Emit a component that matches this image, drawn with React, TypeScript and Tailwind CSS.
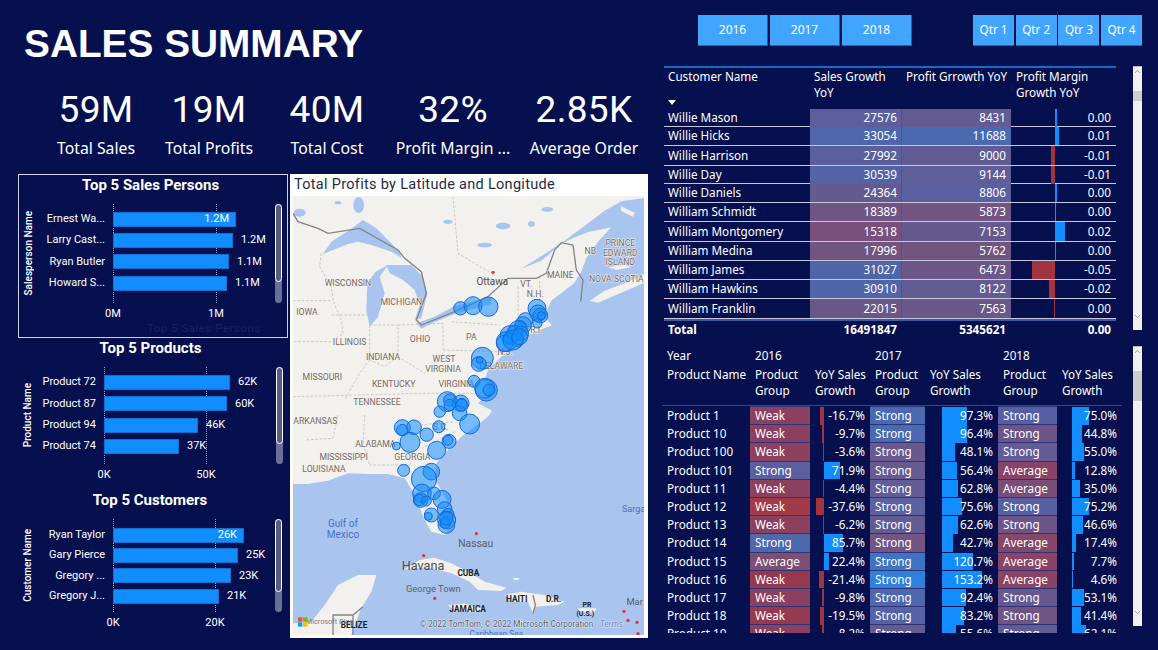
import { ChevronDown, ChevronUp } from "lucide-react";

const din = "font-['Roboto',sans-serif]";
const ui = "font-['Noto_Sans',sans-serif]";

type Bar = { name: string; width: number; value: string; inside?: boolean };

const salesPersons: Bar[] = [
  { name: "Ernest Wa...", width: 123, value: "1.2M", inside: true },
  { name: "Larry Cast...", width: 120, value: "1.2M" },
  { name: "Ryan Butler", width: 116, value: "1.1M" },
  { name: "Howard S...", width: 114, value: "1.1M" },
];
const products: Bar[] = [
  { name: "Product 72", width: 126, value: "62K" },
  { name: "Product 87", width: 123, value: "60K" },
  { name: "Product 94", width: 94, value: "46K" },
  { name: "Product 74", width: 75, value: "37K" },
];
const customers: Bar[] = [
  { name: "Ryan Taylor", width: 131, value: "26K", inside: true },
  { name: "Gary Pierce", width: 125, value: "25K" },
  { name: "Gregory ...", width: 118, value: "23K" },
  { name: "Gregory J...", width: 106, value: "21K" },
];

function ChartCard(props: {
  title: string;
  axis: string;
  bars: Bar[];
  ticks: [string, string];
  tickGap: number;
  box: string;
  catWidth: string;
  pad: string;
  rowHeight: string;
  plotHeight: string;
  thumb: string;
  children?: React.ReactNode;
}) {
  return (
    <div className={`relative w-[270px] ${props.box}`}>
      <div className={`${din} h-[20px] text-center text-[15px] leading-[20px] font-bold text-white`}>{props.title}</div>
      <div className="mt-[9px] flex">
        <div className={`${props.plotHeight} flex w-[18px] items-center justify-center`}>
          <span className={`${din} rotate-180 text-[10px] font-medium whitespace-nowrap text-white [writing-mode:vertical-rl]`}>{props.axis}</span>
        </div>
        <div className={`${props.catWidth} ${props.pad}`}>
          {props.bars.map((b) => (
            <div key={b.name} className={`${din} ${props.rowHeight} flex items-center justify-end text-[11px] whitespace-nowrap text-white`}>
              {b.name}
            </div>
          ))}
        </div>
        <div className="relative ml-[8px] flex-1">
          <div className={`relative ${props.plotHeight} ${props.pad}`}>
            <div className="absolute top-0 bottom-0 left-0 border-l border-dotted border-[#9aa0c0]" />
            <div className="absolute top-0 bottom-0 border-l border-dotted border-[#9aa0c0]" style={{ left: props.tickGap }} />
            {props.bars.map((b) => (
              <div key={b.name} className={`relative ${props.rowHeight} flex items-center`}>
                <div className="flex h-[15px] items-center justify-end border border-[#0f6fd0] bg-[#118dff] pr-[6px]" style={{ width: b.width }}>
                  {b.inside && <span className={`${din} text-[11px] text-white`}>{b.value}</span>}
                </div>
                {!b.inside && <span className={`${din} ml-[8px] text-[11px] text-white`}>{b.value}</span>}
              </div>
            ))}
          </div>
          <div className="relative h-[20px]">
            <span className={`${din} absolute top-[3px] left-0 -translate-x-1/2 text-[11px] text-white`}>{props.ticks[0]}</span>
            <span className={`${din} absolute top-[3px] -translate-x-1/2 text-[11px] text-white`} style={{ left: props.tickGap }}>
              {props.ticks[1]}
            </span>
          </div>
        </div>
        <div className={`${props.plotHeight} ml-[1px] w-[7px] rounded-[4px] bg-[#6a6f9a]`}>
          <div className={`${props.thumb} rounded-[4px] border border-white bg-[#585c80]`} />
        </div>
      </div>
      {props.children}
    </div>
  );
}

const bubblesTop: [number, number, number][] = [
  [517, 415, 20], [555, 407, 27], [601, 410, 29],
  [747, 415, 27], [750, 430, 25], [757, 437, 22], [760, 437, 12], [748, 460, 14],
  [712, 450, 22], [705, 465, 25], [697, 470, 18], [690, 480, 28], [665, 495, 28], [680, 490, 24], [700, 490, 22],
  [655, 515, 30], [662, 505, 15], [688, 510, 20], [650, 520, 25], [675, 510, 30], [695, 500, 24],
  [583, 565, 33], [572, 582, 22], [575, 570, 10],
  [558, 634, 18], [595, 660, 33], [590, 655, 30], [603, 660, 18],
  [478, 695, 30], [485, 690, 18], [518, 700, 25], [522, 700, 15],
];
const bubblesBottom: [number, number, number][] = [
  [455, 20, 17], [485, 0, 17], [515, 25, 22], [520, 0, 18], [545, 57, 30], [452, 65, 18],
  [343, 68, 24], [343, 75, 17], [378, 67, 22], [366, 112, 30], [416, 89, 20], [325, 123, 12],
  [483, 109, 21], [480, 106, 15], [446, 136, 27], [347, 196, 18], [430, 200, 25], [408, 222, 38],
  [402, 265, 28], [438, 265, 19], [462, 283, 27], [398, 285, 22], [395, 285, 17], [415, 288, 15],
  [470, 312, 22], [430, 330, 21], [421, 334, 12], [480, 328, 18], [476, 345, 27], [475, 360, 25],
  [472, 355, 15], [475, 340, 20],
];

const stateLabels: [string, number, number][] = [
  ["WISCONSIN", 180, 349], ["MICHIGAN", 340, 404], ["IOWA", 57, 434], ["ILLINOIS", 185, 526],
  ["OHIO", 396, 515], ["PA", 550, 509], ["INDIANA", 285, 569], ["WEST", 468, 577],
  ["VIRGINIA", 465, 606], ["MISSOURI", 103, 629], ["KENTUCKY", 317, 652], ["VIRGINIA", 505, 652],
  ["TENNESSEE", 267, 706], ["NB", 907, 252], ["PRINCE", 997, 229], ["EDWARD", 997, 259],
  ["ISLAND", 997, 286], ["MAINE", 817, 324], ["NOVA SCOTIA", 985, 336], ["VT.", 715, 351],
  ["N.H.", 742, 382], ["DELAWARE", 640, 598], ["N.J.", 652, 554], ["R.I.", 745, 489],
  ["ARKANSAS", 82, 761], ["ALABAMA", 262, 831], ["MISSISSIPPI", 167, 871], ["GEORGIA", 373, 871],
  ["LOUISIANA", 108, 907], ["S.C.", 458, 779],
];

const redDots: [number, number][] = [
  [615, 307], [565, 1091], [407, 1157], [440, 1285], [1008, 1324], [1020, 1351], [1047, 1357], [1050, 1391],
];

// coordinates are 3x page pixels, origin at the panel corner (288,170)
function MapView() {
  return (
    <svg viewBox="15 78 1053 1317" className="block h-[439px] w-[351px]">
      <rect x="15" y="78" width="1053" height="1317" fill="#a9c5ef" />
      <polygon
        fill="#f2f1ed"
        points="15,78 1068,78 1068,84 1000,94 950,122 900,160 840,205 770,252 700,296 760,272 800,238 830,216 870,198 900,186 970,172 930,215 895,265 880,305 858,340 790,392 768,440 792,466 730,490 680,530 640,560 600,600 590,630 610,660 570,700 612,722 600,740 575,760 520,800 480,840 445,880 440,925 475,990 500,1055 470,1095 430,1085 405,1040 385,980 350,925 300,912 240,912 180,910 120,932 60,942 15,942"
      />
      <polygon fill="#f2f1ed" points="905,392 950,362 1020,336 1068,312 1068,338 1000,368 930,398" />
      <polygon fill="#f2f1ed" points="960,292 1010,284 1030,292 985,300" />
      <polygon fill="#f2f1ed" points="998,108 1040,128 1035,140 1000,123" />
      <g fill="#a9c5ef">
        <polygon points="105,252 130,215 185,180 225,150 265,175 330,240 342,264 310,245 250,225 210,215 180,222" />
        <polygon points="238,340 262,305 300,285 275,320 290,370 270,440 245,470 235,420" />
        <polygon points="295,285 370,285 405,320 418,370 400,445 380,450 395,405 380,360 345,330 305,310" />
        <polygon points="385,460 440,440 500,408 610,380 610,402 500,432 440,456 400,476" />
        <ellipse cx="212" cy="105" rx="16" ry="24" />
        <ellipse cx="645" cy="168" rx="22" ry="10" />
        <ellipse cx="778" cy="118" rx="18" ry="7" />
        <ellipse cx="730" cy="162" rx="10" ry="8" />
        <ellipse cx="480" cy="155" rx="14" ry="6" />
        <ellipse cx="590" cy="225" rx="22" ry="7" />
        <ellipse cx="35" cy="128" rx="18" ry="12" />
        <ellipse cx="150" cy="98" rx="10" ry="5" />
      </g>
      <g fill="none" stroke="#c4c1ba" strokeWidth="2.5" strokeDasharray="8 5">
        <path d="M15 392H130M100 250L95 290L130 350L135 392L160 450L165 490L130 515H15M130 435H240M245 465V570L215 610L170 690" />
        <path d="M245 465H330V560L290 590L245 570M330 465L465 460V540M490 455L635 465M465 540L630 545M15 680L420 670H600" />
        <path d="M330 560L410 610L470 545M690 350V440M755 320V400M495 80L510 250L610 310M860 190L830 215" />
        <path d="M230 735L225 825L245 885M150 735L135 805L50 810M330 805L370 885H245M495 755L400 765M500 785L400 835" />
        <path d="M150 1250L180 1290L225 1310M60 1340L135 1335" />
      </g>
      <path
        d="M15 130L30 155L90 175L120 190L215 175L330 240L350 265L400 305L415 370L385 450L400 465L500 425L600 380L660 325H745L775 310L800 240L820 218L855 225L865 300L885 330L878 395"
        fill="none"
        stroke="#858585"
        strokeWidth="4"
      />
      <g transform="translate(0 705)">
        <polygon fill="#f2f1ed" points="395,465 440,458 490,475 540,500 590,530 655,548 640,558 570,555 545,530 490,505 430,490 380,490 345,495" />
        <polygon fill="#f2f1ed" points="650,570 700,560 770,570 830,590 810,600 740,605 735,625 720,590 670,590" />
        <polygon fill="#f2f1ed" points="15,655 70,650 110,600 150,540 210,510 265,510 250,560 220,610 200,660 190,690 15,690" />
        <polygon fill="#f2f1ed" points="480,600 530,596 590,612 560,622 500,618" />
        <polygon fill="#f2f1ed" points="870,610 925,610 920,622 875,622" />
        <polygon fill="#f2f1ed" points="675,518 695,520 690,526 678,524" />
        <path d="M135 690V630H195L225 605M195 630V690M735 570L742 600L735 625" fill="none" stroke="#858585" strokeWidth="4" />
      </g>
      {stateLabels.map(([t, x, y]) => (
        <text key={t + x} x={x} y={y} textAnchor="middle" fontFamily="Roboto, sans-serif" fontSize="26" fill="#7a6a66" stroke="#f2f1ed" strokeWidth="3" paintOrder="stroke">
          {t}
        </text>
      ))}
      <g>
        {bubblesTop.map(([x, y, r]) => (
          <circle key={`${x}-${y}`} cx={x} cy={y} r={r} fill="#118dff" fillOpacity="0.55" stroke="#1769d6" strokeWidth="3" />
        ))}
      </g>
      <g transform="translate(0 705)">
        {bubblesBottom.map(([x, y, r]) => (
          <circle key={`${x}-${y}`} cx={x} cy={y} r={r} fill="#118dff" fillOpacity="0.55" stroke="#1769d6" strokeWidth="3" />
        ))}
      </g>
      {redDots.map(([x, y]) => (
        <circle key={`${x}-${y}`} cx={x} cy={y} r="5" fill="#e8352c" />
      ))}
      <g fontFamily="Roboto, sans-serif" textAnchor="middle">
        <text x="613" y="344" fontSize="30" fill="#4e4e4e">Ottawa</text>
        <text x="165" y="1072" fontSize="30" fill="#4a72c0">Gulf of</text>
        <text x="165" y="1105" fontSize="30" fill="#4a72c0">Mexico</text>
        <text x="1002" y="1025" fontSize="27" fill="#4a72c0" textAnchor="start">Sargasso</text>
        <text x="563" y="1130" fontSize="31" fill="#5a5f68">Nassau</text>
        <text x="405" y="1200" fontSize="38" fill="#4e4e4e">Havana</text>
        <text x="436" y="1265" fontSize="28" fill="#5a5f68">George Town</text>
        <text x="1040" y="1305" fontSize="28" fill="#5a5f68">Mar</text>
        <g fontWeight="700" fontSize="25" fill="#222">
          <text x="541" y="1219">CUBA</text>
          <text x="539" y="1325">JAMAICA</text>
          <text x="686" y="1297">HAITI</text>
          <text x="797" y="1297">D.R.</text>
          <text x="897" y="1311" fontSize="21">PR</text>
          <text x="892" y="1337" fontSize="21">(U.S.)</text>
          <text x="198" y="1373">BELIZE</text>
        </g>
        <text x="125" y="1362" fontSize="22" fill="#7a7f88">Microsoft Bing</text>
        <text x="700" y="1371" fontSize="24.5" fill="#5a5f68" stroke="#fff" strokeOpacity="0.6" strokeWidth="3" paintOrder="stroke">
          © 2022 TomTom, © 2022 Microsoft Corporation
          <tspan dx="20" fill="#6f82b8">Terms</tspan>
        </text>
        <text x="625" y="1402" fontSize="25" fill="#4a72c0">Caribbean Sea</text>
      </g>
      <rect x="30" y="1342" width="13" height="13" fill="#f25022" />
      <rect x="45" y="1342" width="13" height="13" fill="#7fba00" />
      <rect x="30" y="1357" width="13" height="13" fill="#00a4ef" />
      <rect x="45" y="1357" width="13" height="13" fill="#ffb900" />
    </svg>
  );
}

function Kpi({ value, label, width }: { value: string; label: string; width: string }) {
  return (
    <div className={`${width} text-center whitespace-nowrap text-white`}>
      <div className={`${din} pt-[2px] text-[37px] leading-[44px] tracking-[.3px]`}>{value}</div>
      <div className={`${ui} mt-[4px] text-[15.8px] leading-[24px]`}>{label}</div>
    </div>
  );
}

function Scroller({ h, thumb }: { h: string; thumb: string }) {
  return (
    <div className={`${h} flex w-[9px] flex-col justify-between border-t border-[#b8b8b8] bg-[#f0f0f0] text-[#606060]`}>
      <div>
        <ChevronUp size={9} strokeWidth={1.5} />
        <div className={`${thumb} bg-[#cdcdcd]`} />
      </div>
      <ChevronDown size={9} strokeWidth={1.5} className="mb-[9px]" />
    </div>
  );
}

type CustRow = { name: string; sales: string; profit: string; margin: string; h: string; sBg: string; pBg: string; bar: number };

const customerRows: CustRow[] = [
  { name: "Willie Mason", sales: "27576", profit: "8431", margin: "0.00", h: "h-[18px]", sBg: "#5d5f9c", pBg: "#645b92", bar: 2 },
  { name: "Willie Hicks", sales: "33054", profit: "11688", margin: "0.01", h: "h-[19px]", sBg: "#4f66ac", pBg: "#4a69b0", bar: 4 },
  { name: "Willie Harrison", sales: "27992", profit: "9000", margin: "-0.01", h: "h-[20px]", sBg: "#5b5f9e", pBg: "#625c94", bar: -4 },
  { name: "Willie Day", sales: "30539", profit: "9144", margin: "-0.01", h: "h-[18px]", sBg: "#5363a6", pBg: "#5f5e98", bar: -4 },
  { name: "Willie Daniels", sales: "24364", profit: "8806", margin: "0.00", h: "h-[19px]", sBg: "#645a90", pBg: "#5a609f", bar: 2 },
  { name: "William Schmidt", sales: "18389", profit: "5873", margin: "0.00", h: "h-[19px]", sBg: "#6f5583", pBg: "#725582", bar: 1 },
  { name: "William Montgomery", sales: "15318", profit: "7153", margin: "0.02", h: "h-[20px]", sBg: "#77517c", pBg: "#655a8f", bar: 10 },
  { name: "William Medina", sales: "17996", profit: "5762", margin: "0.00", h: "h-[19px]", sBg: "#71547f", pBg: "#70557f", bar: 1 },
  { name: "William James", sales: "31027", profit: "6473", margin: "-0.05", h: "h-[19px]", sBg: "#5064a9", pBg: "#6d5688", bar: -23 },
  { name: "William Hawkins", sales: "30910", profit: "8122", margin: "-0.02", h: "h-[19px]", sBg: "#5064a9", pBg: "#625c92", bar: -6 },
  { name: "William Franklin", sales: "22015", profit: "7563", margin: "0.00", h: "h-[20px]", sBg: "#685889", pBg: "#695889", bar: -1 },
];

function CustomerTable() {
  return (
    <div className={`${ui} w-[452px] text-[11.7px] text-white`}>
      <div className="grid h-[43px] grid-cols-[146px_91px_110px_105px] border-t-2 border-[#1569c7] leading-[16px]">
        <div className="relative pl-[4px]">
          Customer Name
          <span className="absolute top-[32px] left-[4px] h-0 w-0 border-x-[4px] border-t-[5px] border-x-transparent border-t-white" />
        </div>
        <div className="pl-[4px]">Sales Growth YoY</div>
        <div className="pl-[5px] whitespace-nowrap">Profit Grrowth YoY</div>
        <div className="pl-[5px]">Profit Margin Growth YoY</div>
      </div>
      {customerRows.map((r) => (
        <div key={r.name} className={`grid ${r.h} grid-cols-[146px_91px_110px_105px] items-stretch border-b border-[#c6c8dc]`}>
          <div className="flex items-center pl-[4px] whitespace-nowrap">{r.name}</div>
          <div className="flex items-center justify-end pr-[4px]" style={{ backgroundColor: r.sBg }}>{r.sales}</div>
          <div className="flex items-center justify-end border-l border-[#4a5494] pr-[5px]" style={{ backgroundColor: r.pBg }}>{r.profit}</div>
          <div className="relative flex items-center justify-end pr-[5px]">
            <div className={`absolute top-0 bottom-0 ${r.bar < 0 ? "bg-[#a0343f]" : "bg-[#118dff]"}`} style={{ left: r.bar < 0 ? 44 + r.bar : 44, width: Math.abs(r.bar) }} />
            <span className="relative">{r.margin}</span>
          </div>
        </div>
      ))}
      <div className="grid h-[19px] grid-cols-[146px_91px_110px_105px] items-center border-t-2 border-[#3d5a9e] font-bold">
        <div className="pl-[4px]">Total</div>
        <div className="pr-[4px] text-right">16491847</div>
        <div className="pr-[5px] text-right">5345621</div>
        <div className="pr-[5px] text-right">0.00</div>
      </div>
    </div>
  );
}

type Cell = { group: string; bg: string; pct: number };
type ProductRow = { name: string; cells: [Cell, Cell, Cell] };

const R = (name: string, a: [string, string, number], b: [string, string, number], c: [string, string, number]): ProductRow => ({
  name,
  cells: [a, b, c].map(([group, bg, pct]) => ({ group, bg, pct })) as [Cell, Cell, Cell],
});

const productRows: ProductRow[] = [
  R("Product 1", ["Weak", "#8c4060", -16.7], ["Strong", "#4a69b0", 97.3], ["Strong", "#575fa2", 75.0]),
  R("Product 10", ["Weak", "#8c4060", -9.7], ["Strong", "#4a69b0", 96.4], ["Strong", "#6c5488", 44.8]),
  R("Product 100", ["Weak", "#8c4060", -3.6], ["Strong", "#68588e", 48.1], ["Strong", "#635a96", 55.0]),
  R("Product 101", ["Strong", "#5a5f9f", 71.9], ["Strong", "#665a90", 56.4], ["Average", "#874468", 12.8]),
  R("Product 11", ["Weak", "#8c4060", -4.4], ["Strong", "#615c94", 62.8], ["Average", "#784d78", 35.0]),
  R("Product 12", ["Weak", "#a03a48", -37.6], ["Strong", "#5b60a0", 75.6], ["Strong", "#575fa2", 75.2]),
  R("Product 13", ["Weak", "#8c4060", -6.2], ["Strong", "#615c94", 62.6], ["Strong", "#6c5488", 46.6]),
  R("Product 14", ["Strong", "#4f68ac", 85.7], ["Strong", "#735482", 42.7], ["Average", "#84476a", 17.4]),
  R("Product 15", ["Average", "#7c4f72", 22.4], ["Strong", "#3f73c4", 120.7], ["Average", "#8a4364", 7.7]),
  R("Product 16", ["Weak", "#96394f", -21.4], ["Strong", "#2f7fdc", 153.2], ["Average", "#8a4364", 4.6]),
  R("Product 17", ["Weak", "#8c4060", -9.8], ["Strong", "#4f66ac", 92.4], ["Strong", "#685890", 53.1]),
  R("Product 18", ["Weak", "#963a52", -19.5], ["Strong", "#5562a6", 83.2], ["Strong", "#6f5484", 41.4]),
  R("Product 19", ["Weak", "#8c4060", -8.2], ["Strong", "#665a90", 55.6], ["Strong", "#615c94", 62.1]),
];

const yoyLayout = [
  { axis: 14, scale: 0.22 },
  { axis: 17, scale: 0.26 },
  { axis: 15, scale: 0.227 },
];

function ProductTable() {
  const cols = "grid-cols-[88px_60px_60px_55px_73px_59px_65px]";
  return (
    <div className={`${ui} h-[287px] w-[460px] overflow-hidden text-[11.7px] text-white`}>
      <div className={`grid h-[60px] ${cols} border-b border-[#1e4f9e] leading-[16px]`}>
        <div className="pt-[1px] pl-[5px]">
          <div className="h-[19px]">Year</div>
          <div>Product Name</div>
        </div>
        {["2016", "", "2017", "", "2018", ""].map((y, i) => (
          <div key={i} className="pt-[1px] pl-[5px]">
            <div className="h-[19px]">{y}</div>
            <div>{i % 2 === 0 ? "Product Group" : "YoY Sales Growth"}</div>
          </div>
        ))}
      </div>
      {productRows.map((r) => (
        <div key={r.name} className={`grid h-[18.2px] ${cols}`}>
          <div className="flex items-center pl-[5px]">{r.name}</div>
          {r.cells.map((c, i) => {
            const w = Math.abs(c.pct) * yoyLayout[i].scale;
            return [
              <div key={`g${i}`} className="flex items-center border-y border-[#2b3478] pl-[5px]" style={{ backgroundColor: c.bg }}>
                {c.group}
              </div>,
              <div key={`y${i}`} className="relative flex items-center justify-end pr-[5px]">
                <div
                  className={`absolute top-px bottom-px ${c.pct < 0 ? "bg-[#a0343f]" : "bg-[#118dff]"}`}
                  style={{ left: c.pct < 0 ? yoyLayout[i].axis - w : yoyLayout[i].axis, width: w }}
                />
                <span className="relative">{c.pct.toFixed(1)}%</span>
              </div>,
            ];
          })}
        </div>
      ))}
    </div>
  );
}

export default function App() {
  return (
    <div className="flex h-[650px] w-[1158px] overflow-hidden bg-[#07104e]">
      <div className="w-[655px] shrink-0">
        <h1 className="h-[86px] pt-[21px] pl-[24px] font-['Liberation_Sans',sans-serif] text-[38.8px] leading-[46px] font-bold text-white">SALES SUMMARY</h1>
        <div className="flex h-[88px] pl-[40px]">
          <Kpi value="59M" label="Total Sales" width="w-[112px]" />
          <Kpi value="19M" label="Total Profits" width="w-[114px]" />
          <Kpi value="40M" label="Total Cost" width="w-[122px]" />
          <Kpi value="32%" label="Profit Margin ..." width="w-[130px]" />
          <Kpi value="2.85K" label="Average Order" width="w-[132px]" />
        </div>
        <div className="flex pl-[18px]">
          <div className="flex flex-col">
            <ChartCard title="Top 5 Sales Persons" axis="Salesperson Name" bars={salesPersons} ticks={["0M", "1M"]} tickGap={103} box="h-[164px] border border-[#d0d2e4] pr-[5px]" catWidth="w-[68px]" pad="pt-[4.5px]" rowHeight="h-[21.4px]" plotHeight="h-[99px]" thumb="h-[78px]">
              <div className={`${din} absolute top-[145px] left-[128px] text-[11.5px] tracking-[.5px] text-[#1b2358]`}>Top 5 Sales Persons</div>
            </ChartCard>
            <ChartCard title="Top 5 Products" axis="Product Name" bars={products} ticks={["0K", "50K"]} tickGap={102} box="h-[152px] pr-[5px]" catWidth="w-[60px]" pad="pt-[5px]" rowHeight="h-[21.3px]" plotHeight="h-[97px]" thumb="h-[77px]" />
            <ChartCard title="Top 5 Customers" axis="Customer Name" bars={customers} ticks={["0K", "20K"]} tickGap={102} box="h-[150px] pr-[6px]" catWidth="w-[69px]" pad="pt-[6px]" rowHeight="h-[20.4px]" plotHeight="h-[93px]" thumb="h-[73px]" />
          </div>
          <div className="ml-[2px] h-[464px] w-[358px] bg-white pl-[3px]">
            <div className={`${din} h-[22px] pt-[1px] pl-[1px] text-[14.5px] leading-[20px] tracking-[.3px] text-[#252b45]`}>Total Profits by Latitude and Longitude</div>
            <MapView />
          </div>
        </div>
      </div>
      <div className="flex-1">
        <div className="flex pt-[15px]">
          <div className={`${ui} ml-[43px] flex gap-[2px] text-[12px] text-white`}>
            {["2016", "2017", "2018"].map((y) => (
              <div key={y} className="flex h-[31px] w-[70px] items-center justify-center border-r border-b border-[#2a5ca8] bg-[#41a4ff]">{y}</div>
            ))}
          </div>
          <div className={`${ui} ml-[61px] flex gap-[1.7px] text-[11.7px] text-white`}>
            {["Qtr 1", "Qtr 2", "Qtr 3", "Qtr 4"].map((q) => (
              <div key={q} className="flex h-[31px] w-[41px] items-center justify-center border-b border-[#2a5ca8] bg-[#41a4ff]">{q}</div>
            ))}
          </div>
        </div>
        <div className="mt-[20px] flex pl-[9px]">
          <CustomerTable />
          <div className="ml-[17px]">
            <Scroller h="h-[264px]" thumb="h-[10px] mt-[15px]" />
          </div>
        </div>
        <div className="mt-[8px] flex pl-[7px]">
          <ProductTable />
          <div className="ml-[11px]">
            <Scroller h="h-[280px]" thumb="h-[30px] mt-[15px]" />
          </div>
        </div>
      </div>
    </div>
  );
}
